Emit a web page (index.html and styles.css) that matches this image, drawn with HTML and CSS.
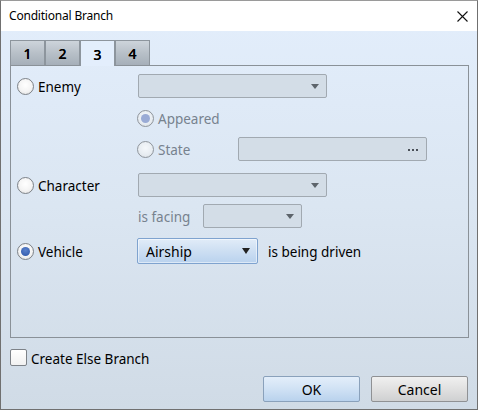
FILE: index.html
```html
<!DOCTYPE html>
<html>
<head>
<meta charset="utf-8">
<link rel="stylesheet" href="styles.css">
</head>
<body>
<div class="window">
  <div class="titlebar">
    <span class="title">Conditional Branch</span>
    <svg class="close" width="11" height="11" viewBox="0 0 11 11"><path d="M0.5 0.5 L10.5 10.5 M10.5 0.5 L0.5 10.5" stroke="#111" stroke-width="1.1" fill="none"/></svg>
  </div>
  <div class="content">
    <div class="tabs">
      <div class="tab">1</div>
      <div class="tab">2</div>
      <div class="tab active">3</div>
      <div class="tab">4</div>
    </div>
    <div class="panel">
      <div class="row r1">
        <div class="lead"><span class="radio"></span><span class="lbl">Enemy</span></div>
        <div class="combo disabled w189"><span class="val"></span><svg class="arrow" width="8" height="5" viewBox="0 0 8 5"><polygon points="0,0 8,0 4,5" fill="#5d646b"/></svg></div>
      </div>
      <div class="row r2 sub">
        <span class="radio dis checked-dis"></span><span class="lbl gray">Appeared</span>
      </div>
      <div class="row r3 sub">
        <div class="sublead"><span class="radio dis"></span><span class="lbl gray">State</span></div>
        <div class="combo disabled w189"><span class="val"></span><svg class="dots" width="10" height="2" viewBox="0 0 10 2"><rect x="0" y="0" width="2" height="2" fill="#4a5058"/><rect x="4" y="0" width="2" height="2" fill="#4a5058"/><rect x="8" y="0" width="2" height="2" fill="#4a5058"/></svg></div>
      </div>
      <div class="row r4">
        <div class="lead"><span class="radio"></span><span class="lbl">Character</span></div>
        <div class="combo disabled w189"><span class="val"></span><svg class="arrow" width="8" height="5" viewBox="0 0 8 5"><polygon points="0,0 8,0 4,5" fill="#5d646b"/></svg></div>
      </div>
      <div class="row r5 sub2">
        <span class="lbl gray facing">is facing</span>
        <div class="combo disabled w99"><span class="val"></span><svg class="arrow" width="8" height="5" viewBox="0 0 8 5"><polygon points="0,0 8,0 4,5" fill="#5d646b"/></svg></div>
      </div>
      <div class="row r6">
        <div class="lead lead6"><span class="radio checked"></span><span class="lbl">Vehicle</span></div>
        <div class="combo active-combo"><span class="val">Airship</span><svg class="arrow" width="8" height="6" viewBox="0 0 8 6"><polygon points="0,0 8,0 4,6" fill="#222"/></svg></div>
        <span class="lbl driven">is being driven</span>
      </div>
    </div>
    <div class="checkrow">
      <span class="checkbox"></span><span class="lbl">Create Else Branch</span>
    </div>
    <div class="buttons">
      <div class="btn ok">OK</div>
      <div class="btn cancel">Cancel</div>
    </div>
  </div>
</div>
</body>
</html>
```
FILE: styles.css
```css
html, body {
  margin: 0;
  padding: 0;
  background: #ffffff;
}
body {
  width: 478px;
  height: 411px;
  font-family: "Noto Sans", "Open Sans", sans-serif;
  font-size: 13.5px;
  color: #000;
}
.window {
  width: 478px;
  height: 410px;
  box-sizing: border-box;
  border: 1px solid #707070;
  border-top-color: #9a9a9a;
  display: flex;
  flex-direction: column;
  background: linear-gradient(to bottom, #e3eefc 0%, #dbe6f2 50%, #d0dbe6 100%);
}
.titlebar {
  height: 30px;
  background: #ffffff;
  display: flex;
  align-items: center;
  justify-content: space-between;
  padding: 0 9px 0 8px;
  flex: none;
}
.title {
  font-size: 12px;
  color: #000;
  letter-spacing: -0.2px;
  margin-top: -1px;
}
.close {
  margin-top: 1px;
}
.content {
  flex: 1;
  display: flex;
  flex-direction: column;
  padding: 9px 8px 0 9px;
}
.tabs {
  display: flex;
  height: 25px;
  position: relative;
  z-index: 2;
}
.tab {
  width: 35px;
  height: 25px;
  box-sizing: border-box;
  border: 1px solid #8d959d;
  border-bottom: none;
  background: linear-gradient(to bottom, #cdd4db 0%, #b8c0c8 50%, #a6afb9 100%);
  display: flex;
  align-items: center;
  justify-content: center;
  font-size: 14px;
  font-weight: 500;
  color: #000;
  padding-top: 1px;
  text-shadow: 0 0 0.4px #000;
}
.tab.active {
  height: 26px;
  background: #e3eefc;
  margin-bottom: -1px;
}
.panel {
  width: 459px;
  height: 273px;
  box-sizing: border-box;
  border: 1px solid #8a9198;
  display: flex;
  flex-direction: column;
  padding: 8px 0 0 6px;
}
.row {
  display: flex;
  align-items: center;
  height: 24px;
}
.r2 { margin-top: 8px; }
.r3 { margin-top: 7px; }
.r4 { margin-top: 12px; }
.r5 { margin-top: 7px; }
.r6 { margin-top: 10px; height: 26px; }
.sub { padding-left: 120px; }
.sub2 { padding-left: 121px; }
.lead {
  width: 121px;
  display: flex;
  align-items: center;
}
.lead6 { width: 120px; }
.sublead {
  width: 101px;
  display: flex;
  align-items: center;
}
.radio {
  width: 17px;
  height: 17px;
  box-sizing: border-box;
  border-radius: 50%;
  border: 1px solid #7d8288;
  background: radial-gradient(circle at 50% 40%, #ffffff 0%, #f4f4f4 55%, #dcdcdc 100%);
  flex: none;
  position: relative;
}
.radio.dis {
  border-color: #8f959c;
  background: radial-gradient(circle at 50% 40%, #f5f8fb 0%, #e7ecf1 60%, #d3d9df 100%);
}
.radio.checked::after,
.radio.checked-dis::after {
  content: "";
  position: absolute;
  left: 3px;
  top: 3px;
  width: 9px;
  height: 9px;
  border-radius: 50%;
}
.radio.checked::after {
  background: radial-gradient(circle at 50% 35%, #5b82cc 0%, #3a62b2 70%, #2f569f 100%);
}
.radio.checked-dis::after {
  background: #9aabd5;
}
.lbl {
  margin-left: 4px;
  padding-top: 2px;
  white-space: nowrap;
}
.lbl.gray { color: #77828e; }
.facing {
  margin-left: 0;
  width: 65px;
}
.combo {
  height: 24px;
  box-sizing: border-box;
  border-radius: 2px;
  display: flex;
  align-items: center;
  justify-content: space-between;
  padding: 0 7px 0 7px;
}
.combo.disabled {
  border: 1px solid #a1a9b1;
  background: #d3dde7;
}
.w189 { width: 189px; }
.w99 { width: 99px; }
.arrow { flex: none; }
.dots {
  flex: none;
  margin-right: 1px;
  margin-top: 1px;
}
.active-combo {
  width: 121px;
  height: 26px;
  border: 1px solid #7fa3cf;
  background: linear-gradient(to bottom, #e1ecf8 0%, #cfe0f3 45%, #b9d2ee 100%);
  padding: 0 7px 0 8px;
  box-shadow: inset 0 0 0 1px rgba(255,255,255,0.5);
}
.active-combo .val { color: #000; font-size: 14px; padding-top: 1px; }
.driven { margin-left: 10px; }
.checkrow {
  display: flex;
  align-items: center;
  margin-top: 11px;
  height: 17px;
}
.checkbox {
  width: 17px;
  height: 17px;
  box-sizing: border-box;
  border: 1px solid #7d8288;
  border-radius: 2px;
  background: linear-gradient(to bottom, #ffffff 0%, #f1f1f1 100%);
  flex: none;
}
.checkrow .lbl { margin-left: 4px; }
.buttons {
  display: flex;
  justify-content: flex-end;
  gap: 11px;
  margin-top: 10px;
  margin-right: 1px;
}
.btn {
  width: 97px;
  height: 26px;
  box-sizing: border-box;
  border-radius: 2px;
  display: flex;
  align-items: center;
  justify-content: center;
  font-size: 14px;
  color: #000;
}
.btn.ok {
  border: 1px solid #8aa1bb;
  background: linear-gradient(to bottom, #e3eefa 0%, #d2e3f5 45%, #b9d2ed 100%);
}
.btn.cancel {
  border: 1px solid #8f9194;
  background: linear-gradient(to bottom, #f0f0f0 0%, #e2e2e2 45%, #cfd0d1 100%);
}
```
